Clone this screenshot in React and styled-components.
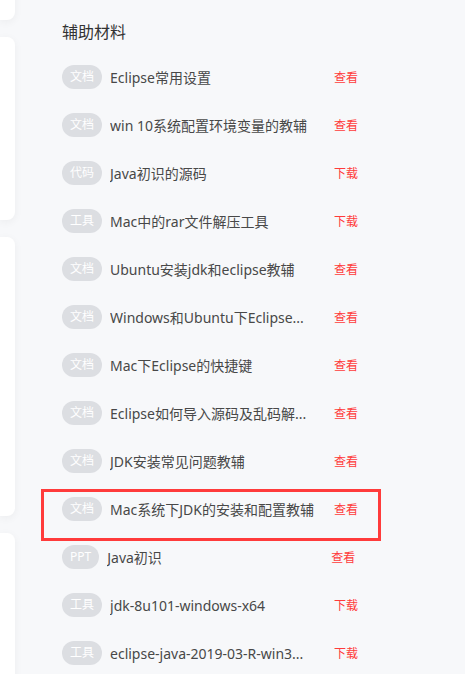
import React from "react";
import styled, { createGlobalStyle } from "styled-components";

const GlobalStyle = createGlobalStyle`
  html, body {
    margin: 0;
    padding: 0;
    background: #f7f8fa;
    overflow: hidden;
  }
  body {
    font-family: "Noto Sans", "Noto Sans CJK SC", sans-serif;
  }
`;

// titles are shown as the list shows them (long ones already shortened)
const materials = [
  { tag: "文档", title: "Eclipse常用设置", action: "查看" },
  { tag: "文档", title: "win 10系统配置环境变量的教辅", action: "查看" },
  { tag: "代码", title: "Java初识的源码", action: "下载" },
  { tag: "工具", title: "Mac中的rar文件解压工具", action: "下载" },
  { tag: "文档", title: "Ubuntu安装jdk和eclipse教辅", action: "查看" },
  { tag: "文档", title: "Windows和Ubuntu下Eclipse...", action: "查看" },
  { tag: "文档", title: "Mac下Eclipse的快捷键", action: "查看" },
  { tag: "文档", title: "Eclipse如何导入源码及乱码解...", action: "查看" },
  { tag: "文档", title: "JDK安装常见问题教辅", action: "查看" },
  { tag: "文档", title: "Mac系统下JDK的安装和配置教辅", action: "查看", marked: true },
  { tag: "PPT", title: "Java初识", action: "查看" },
  { tag: "工具", title: "jdk-8u101-windows-x64", action: "下载" },
  { tag: "工具", title: "eclipse-java-2019-03-R-win3...", action: "下载" },
];

const Page = styled.div`
  display: flex;
  height: 674px;
  overflow: hidden;
`;

const SideColumn = styled.div`
  width: 15px;
  flex-shrink: 0;
  display: flex;
  flex-direction: column;
  gap: 17px;
  margin-top: -200px;
`;

const SideCard = styled.div`
  height: ${p => p.h}px;
  flex-shrink: 0;
  background: #fff;
  border-radius: 0 8px 8px 0;
  box-shadow: 0 2px 8px rgba(0, 0, 0, 0.05);
`;

const Main = styled.div`
  padding: 20px 0 0 47px;
`;

const Heading = styled.h3`
  margin: 0 0 9px 0;
  height: 24px;
  line-height: 24px;
  font-size: 16px;
  font-weight: normal;
  color: #333;
`;

const Row = styled.div`
  position: relative;
  display: flex;
  align-items: center;
  height: 48px;
`;

const Tag = styled.span`
  flex-shrink: 0;
  height: 24px;
  line-height: 24px;
  padding: 0 8px;
  border-radius: 12px;
  background: #dcdee2;
  color: #fff;
  font-size: 12px;
`;

const Title = styled.span`
  width: 210px;
  margin-left: 8px;
  font-size: 14px;
  color: #484848;
  white-space: nowrap;
  overflow: hidden;
  text-overflow: ellipsis;
`;

const Action = styled.a`
  margin-left: 14px;
  font-size: 12px;
  color: #ff3b3b;
  cursor: pointer;
`;

const Highlight = styled.div`
  position: absolute;
  top: 4px;
  left: -21px;
  width: 340px;
  height: 52px;
  box-sizing: border-box;
  border: 3px solid #ff3b3b;
  pointer-events: none;
`;

export default function App() {
  return (
    <>
      <GlobalStyle />
      <Page>
        <SideColumn>
          <SideCard h={220} />
          <SideCard h={183} />
          <SideCard h={279} />
          <SideCard h={300} />
        </SideColumn>
        <Main>
          <Heading>辅助材料</Heading>
          {materials.map((m, i) => (
            <Row key={i}>
              <Tag>{m.tag}</Tag>
              <Title>{m.title}</Title>
              <Action>{m.action}</Action>
              {m.marked && <Highlight />}
            </Row>
          ))}
        </Main>
      </Page>
    </>
  );
}
